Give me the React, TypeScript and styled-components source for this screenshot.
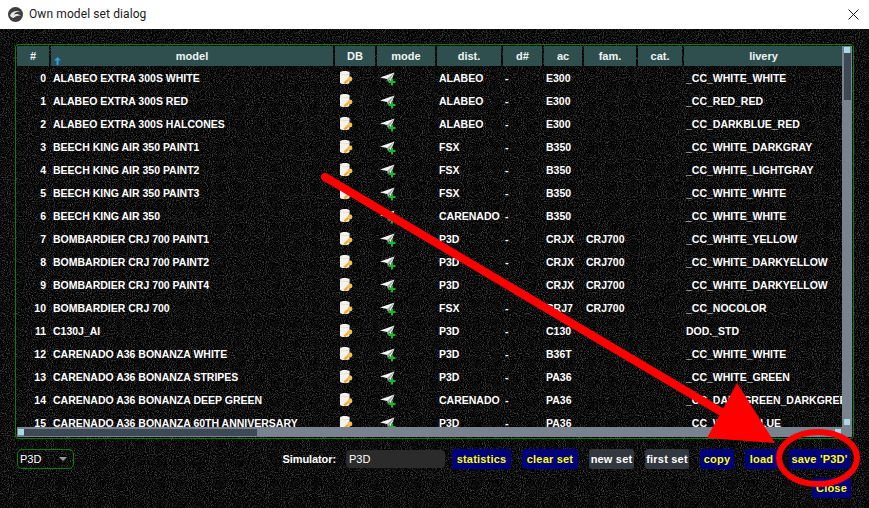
import React from 'react'
import styled, { createGlobalStyle } from 'styled-components'

const noise =
  "data:image/svg+xml,%3Csvg xmlns='http://www.w3.org/2000/svg' width='256' height='256'%3E%3Cfilter id='n'%3E%3CfeTurbulence type='fractalNoise' baseFrequency='0.95' numOctaves='2' seed='4'/%3E%3CfeColorMatrix values='0 0 0 0 0.22 0 0 0 0 0.22 0 0 0 0 0.22 1.4 0 0 0 -0.62'/%3E%3C/filter%3E%3Crect width='256' height='256' filter='url(%23n)'/%3E%3C/svg%3E"

const GlobalStyle = createGlobalStyle`
  html, body {
    margin: 0;
    padding: 0;
    background: #000000;
  }
`

const Window = styled.div`
  position: relative;
  width: 869px;
  height: 508px;
  overflow: hidden;
  display: flex;
  flex-direction: column;
  font-family: 'Liberation Sans', Arial, sans-serif;
  font-size: 10.5px;
  font-weight: bold;
  color: #ffffff;
`

const TitleBar = styled.div`
  height: 29px;
  flex: none;
  background: #ffffff;
  display: flex;
  align-items: center;
  padding: 0 10px 1px 8px;
  box-sizing: border-box;
  color: #1a1a1a;
`

const TitleText = styled.span`
  margin-left: 6px;
  flex: 1;
  font-family: Roboto, sans-serif;
  font-size: 12px;
  font-weight: normal;
  letter-spacing: 0.1px;
`

const Body = styled.div`
  flex: 1;
  background-color: #000000;
  background-image: url("${noise}");
  padding: 15px 15px 0 15px;
  display: flex;
  flex-direction: column;
`

const TableBox = styled.div`
  height: 395px;
  box-sizing: border-box;
  border: 1px solid #0a7d0a;
  border-radius: 3px;
  padding: 1px;
  display: grid;
  grid-template-columns: 825px 10px;
  grid-template-rows: 381px 10px;
`

const TableView = styled.div`
  overflow: hidden;
`

const columns = '32px 282px 40px 58px 64px 39px 38px 52px 44px 159px'

const HeaderRow = styled.div`
  display: grid;
  grid-template-columns: ${columns};
  column-gap: 2px;
  height: 20px;
`

const HeaderCell = styled.div`
  position: relative;
  background: #2f4f4f;
  display: flex;
  align-items: center;
  justify-content: center;
  font-size: 11px;
  color: #eef4f4;
`

const SortArrow = styled.svg`
  position: absolute;
  left: 3px;
  bottom: 1px;
`

const Row = styled.div`
  display: grid;
  grid-template-columns: ${columns};
  column-gap: 2px;
  height: 23px;
  align-items: center;
`

const Cell = styled.div<{ $right?: boolean }>`
  white-space: nowrap;
  overflow: hidden;
  padding: 0 2px;
  text-align: ${p => (p.$right ? 'right' : 'left')};
  ${p => p.$right && 'padding-right: 3px;'}
`

const IconCell = styled.div<{ $inset: number }>`
  display: flex;
  align-items: center;
  padding-left: ${p => p.$inset}px;
`

const ScrollTrackV = styled.div`
  background: #78838f;
  display: flex;
  flex-direction: column;
  align-items: center;
  padding: 1px 0 2px;
  box-sizing: border-box;
`

const ScrollTrackH = styled.div`
  background: #78838f;
  display: flex;
  align-items: center;
  padding: 0 1px;
`

const ScrollEnd = styled.div`
  width: 6px;
  height: 6px;
  flex: none;
  background: #a9d8e6;
`

const ThumbV = styled.div`
  width: 7px;
  height: 47px;
  background: #3d4a55;
`

const ThumbH = styled.div`
  height: 7px;
  width: 233px;
  background: #3d4a55;
`

const Corner = styled.div`
  background: #78838f;
`

const Spacer = styled.div`
  flex: 1;
`

const ControlRow = styled.div`
  display: flex;
  align-items: center;
  margin-top: 10px;
  height: 20px;
  padding: 0 4px 0 2px;
`

const SimSelect = styled.div`
  width: 57px;
  height: 20px;
  box-sizing: border-box;
  border: 1px solid #0a7d0a;
  border-radius: 5px;
  display: flex;
  align-items: center;
  justify-content: space-between;
  padding: 0 6px 0 2px;
  font-weight: normal;
  font-size: 11px;
`

const SelectArrow = styled.span`
  width: 0;
  height: 0;
  border-left: 4px solid transparent;
  border-right: 4px solid transparent;
  border-top: 4px solid #9a9a9a;
`

const SimLabel = styled.span`
  margin-right: 10px;
  font-size: 11px;
  letter-spacing: -0.1px;
`

const SimInput = styled.div`
  width: 99px;
  height: 18px;
  box-sizing: border-box;
  background: #2b2b2b;
  border-radius: 4px;
  padding: 0 3px;
  line-height: 18px;
  font-weight: normal;
  font-size: 11px;
  margin-right: 7px;
`

const ButtonGroup = styled.div`
  display: flex;
  gap: 11px;
`

const Button = styled.button<{ $grey?: boolean; $w: number }>`
  width: ${p => p.$w}px;
  height: 20px;
  padding: 0;
  margin: 0;
  border: none;
  border-radius: 3px;
  font: inherit;
  font-size: 11px;
  letter-spacing: 0.2px;
  white-space: nowrap;
  background: ${p => (p.$grey ? '#33383f' : '#00007f')};
  color: ${p => (p.$grey ? '#ffffff' : '#ffff00')};
`

const CloseRow = styled.div`
  display: flex;
  justify-content: flex-end;
  margin-top: 9px;
  padding-right: 3px;
`

const Annotation = styled.svg`
  position: absolute;
  inset: 0;
  pointer-events: none;
`

const DbIcon = () => (
  <svg width="15" height="15" viewBox="0 0 15 15">
    <path d="M1 2.5C1 .5 10.5 .5 10.5 2.5V12.5C10.5 14.5 1 14.5 1 12.5Z" fill="#f6f3ee" />
    <path d="M1 3C3 5 8.5 5 10.5 3V4C8.5 5.6 3 5.6 1 4Z" fill="#d8d2c8" />
    <path d="M4.5 12.5L9.5 8L11 10L6 14.5Z" fill="#f0ac38" />
    <circle cx="11" cy="9" r="2.4" fill="#f6c04f" />
  </svg>
)

const ModeIcon = () => (
  <svg width="16" height="16" viewBox="0 0 16 16">
    <path d="M0 7.5L14.5 2.5L11 11L7 9Z" fill="#f4f7f4" />
    <path d="M7 9L14.5 2.5L8 12.5Z" fill="#9aa69e" />
    <path d="M11 8.5h2v2.5h2.5v2H13v2.5h-2V13H8.5v-2H11Z" fill="#14b828" />
  </svg>
)

const LogoIcon = () => (
  <svg width="15" height="15" viewBox="0 0 15 15">
    <circle cx="7.5" cy="7.5" r="7.5" fill="#3e3e3e" />
    <path d="M2 8.5C3 4.5 8 3 12.5 4.5C9 4.5 6.5 5.5 6 7.5C8 6.5 11 7 13 8.5C10 8.2 7 9 5.5 11C4 11 2.8 10 2 8.5Z" fill="#e8e8e8" />
  </svg>
)

const CloseIcon = () => (
  <svg width="11" height="11" viewBox="0 0 11 11">
    <path d="M.5 .5L10.5 10.5M10.5 .5L.5 10.5" stroke="#1a1a1a" strokeWidth="1" />
  </svg>
)

type Model = [string, string, string, string, string]

const models: Model[] = [
  ['ALABEO EXTRA 300S WHITE', 'ALABEO', 'E300', '', '_CC_WHITE_WHITE'],
  ['ALABEO EXTRA 300S RED', 'ALABEO', 'E300', '', '_CC_RED_RED'],
  ['ALABEO EXTRA 300S HALCONES', 'ALABEO', 'E300', '', '_CC_DARKBLUE_RED'],
  ['BEECH KING AIR 350 PAINT1', 'FSX', 'B350', '', '_CC_WHITE_DARKGRAY'],
  ['BEECH KING AIR 350 PAINT2', 'FSX', 'B350', '', '_CC_WHITE_LIGHTGRAY'],
  ['BEECH KING AIR 350 PAINT3', 'FSX', 'B350', '', '_CC_WHITE_WHITE'],
  ['BEECH KING AIR 350', 'CARENADO', 'B350', '', '_CC_WHITE_WHITE'],
  ['BOMBARDIER CRJ 700 PAINT1', 'P3D', 'CRJX', 'CRJ700', '_CC_WHITE_YELLOW'],
  ['BOMBARDIER CRJ 700 PAINT2', 'P3D', 'CRJX', 'CRJ700', '_CC_WHITE_DARKYELLOW'],
  ['BOMBARDIER CRJ 700 PAINT4', 'P3D', 'CRJX', 'CRJ700', '_CC_WHITE_DARKYELLOW'],
  ['BOMBARDIER CRJ 700', 'FSX', 'CRJ7', 'CRJ700', '_CC_NOCOLOR'],
  ['C130J_AI', 'P3D', 'C130', '', 'DOD._STD'],
  ['CARENADO A36 BONANZA WHITE', 'P3D', 'B36T', '', '_CC_WHITE_WHITE'],
  ['CARENADO A36 BONANZA STRIPES', 'P3D', 'PA36', '', '_CC_WHITE_GREEN'],
  ['CARENADO A36 BONANZA DEEP GREEN', 'CARENADO', 'PA36', '', '_CC_DARKGREEN_DARKGREEN'],
  ['CARENADO A36 BONANZA 60TH ANNIVERSARY', 'P3D', 'PA36', '', '_CC_WHITE_BLUE'],
]

const headers = ['#', 'model', 'DB', 'mode', 'dist.', 'd#', 'ac', 'fam.', 'cat.', 'livery']

export default function App() {
  return (
    <Window>
      <GlobalStyle />
      <TitleBar>
        <LogoIcon />
        <TitleText>Own model set dialog</TitleText>
        <CloseIcon />
      </TitleBar>
      <Body>
        <TableBox>
          <TableView>
            <HeaderRow>
              {headers.map(h => (
                <HeaderCell key={h}>
                  {h === 'model' && (
                    <SortArrow width="7" height="8" viewBox="0 0 7 8">
                      <path d="M3.5 0L7 3.5H4.5V8H2.5V3.5H0Z" fill="#2f9be8" />
                    </SortArrow>
                  )}
                  {h}
                </HeaderCell>
              ))}
            </HeaderRow>
            {models.map(([model, dist, ac, fam, livery], i) => (
              <Row key={model}>
                <Cell $right>{i}</Cell>
                <Cell>{model}</Cell>
                <IconCell $inset={4}><DbIcon /></IconCell>
                <IconCell $inset={3}><ModeIcon /></IconCell>
                <Cell>{dist}</Cell>
                <Cell>-</Cell>
                <Cell>{ac}</Cell>
                <Cell>{fam}</Cell>
                <Cell />
                <Cell>{livery}</Cell>
              </Row>
            ))}
          </TableView>
          <ScrollTrackV>
            <ScrollEnd />
            <ThumbV />
            <Spacer />
            <ScrollEnd />
          </ScrollTrackV>
          <ScrollTrackH>
            <ScrollEnd />
            <ThumbH />
            <Spacer />
            <ScrollEnd />
          </ScrollTrackH>
          <Corner />
        </TableBox>
        <ControlRow>
          <SimSelect>
            P3D
            <SelectArrow />
          </SimSelect>
          <Spacer />
          <SimLabel>Simulator:</SimLabel>
          <SimInput>P3D</SimInput>
          <ButtonGroup>
            <Button $w={59}>statistics</Button>
            <Button $w={56}>clear set</Button>
            <Button $w={45} $grey>new set</Button>
            <Button $w={44} $grey>first set</Button>
            <Button $w={34}>copy</Button>
            <Button $w={33}>load</Button>
            <Button $w={61}>save 'P3D'</Button>
          </ButtonGroup>
        </ControlRow>
        <CloseRow>
          <Button $w={39}>Close</Button>
        </CloseRow>
      </Body>
      <Annotation width="869" height="508" viewBox="0 0 869 508">
        <path d="M325 177L740 423" stroke="#ff0000" strokeWidth="8" strokeLinecap="round" />
        <path d="M737 383L707 438L775 443Z" fill="#ff0000" />
        <ellipse cx="818" cy="458" rx="39" ry="26" fill="none" stroke="#ff0000" strokeWidth="6" />
      </Annotation>
    </Window>
  )
}
